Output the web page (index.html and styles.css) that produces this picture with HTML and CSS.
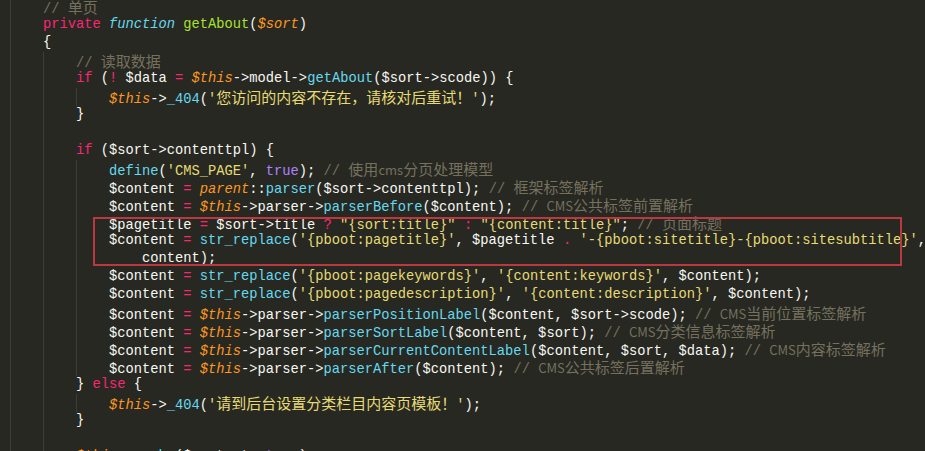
FILE: index.html
```html
<!DOCTYPE html>
<html>
<head>
<meta charset="utf-8">
<link rel="stylesheet" href="styles.css">
</head>
<body>
<div class="editor">
<div class="code">
<div class="ln"><span class="i"></span><span class="cm">// <span class="z">单页</span></span></div>
<div class="ln"><span class="i"></span><span class="k">private</span> <span class="s">function</span> <span class="f">getAbout</span>(<span class="p">$sort</span>)</div>
<div class="ln"><span class="i"></span>{</div>
<div class="ln"><span class="i"></span><span class="i"></span><span class="cm">// <span class="z">读取数据</span></span></div>
<div class="ln"><span class="i"></span><span class="i"></span><span class="k">if</span> (<span class="k">!</span> $data <span class="k">=</span> <span class="p">$this</span>-&gt;model-&gt;<span class="c">getAbout</span>($sort-&gt;scode)) {</div>
<div class="ln"><span class="i"></span><span class="i"></span><span class="i"></span><span class="p">$this</span>-&gt;<span class="c">_404</span>(<span class="str">'<span class="z">您访问的内容不存在，请核对后重试！</span>'</span>);</div>
<div class="ln"><span class="i"></span><span class="i"></span>}</div>
<div class="ln"><span class="i"></span><span class="i"></span></div>
<div class="ln"><span class="i"></span><span class="i"></span><span class="k">if</span> ($sort-&gt;contenttpl) {</div>
<div class="ln"><span class="i"></span><span class="i"></span><span class="i"></span><span class="c">define</span>(<span class="str">'CMS_PAGE'</span>, <span class="n">true</span>); <span class="cm">// <span class="z">使用<span class="za">cms</span>分页处理模型</span></span></div>
<div class="ln"><span class="i"></span><span class="i"></span><span class="i"></span>$content <span class="k">=</span> <span class="p">parent</span>::<span class="c">parser</span>($sort-&gt;contenttpl); <span class="cm">// <span class="z">框架标签解析</span></span></div>
<div class="ln"><span class="i"></span><span class="i"></span><span class="i"></span>$content <span class="k">=</span> <span class="p">$this</span>-&gt;parser-&gt;<span class="c">parserBefore</span>($content); <span class="cm">// <span class="z"><span class="za">CMS</span>公共标签前置解析</span></span></div>
<div class="ln"><span class="i"></span><span class="i"></span><span class="i"></span>$pagetitle <span class="k">=</span> $sort-&gt;title <span class="k">?</span> <span class="str">"{sort:title}"</span> <span class="k">:</span> <span class="str">"{content:title}"</span>; <span class="cm">// <span class="z">页面标题</span></span></div>
<div class="ln"><span class="i"></span><span class="i"></span><span class="i"></span>$content <span class="k">=</span> <span class="c">str_replace</span>(<span class="str">'{pboot:pagetitle}'</span>, $pagetitle <span class="k">.</span> <span class="str">'-{pboot:sitetitle}-{pboot:sitesubtitle}'</span>, $</div>
<div class="ln"><span class="i"></span><span class="i"></span><span class="i"></span><span class="w"></span>content);</div>
<div class="ln"><span class="i"></span><span class="i"></span><span class="i"></span>$content <span class="k">=</span> <span class="c">str_replace</span>(<span class="str">'{pboot:pagekeywords}'</span>, <span class="str">'{content:keywords}'</span>, $content);</div>
<div class="ln"><span class="i"></span><span class="i"></span><span class="i"></span>$content <span class="k">=</span> <span class="c">str_replace</span>(<span class="str">'{pboot:pagedescription}'</span>, <span class="str">'{content:description}'</span>, $content);</div>
<div class="ln"><span class="i"></span><span class="i"></span><span class="i"></span>$content <span class="k">=</span> <span class="p">$this</span>-&gt;parser-&gt;<span class="c">parserPositionLabel</span>($content, $sort-&gt;scode); <span class="cm">// <span class="z"><span class="za">CMS</span>当前位置标签解析</span></span></div>
<div class="ln"><span class="i"></span><span class="i"></span><span class="i"></span>$content <span class="k">=</span> <span class="p">$this</span>-&gt;parser-&gt;<span class="c">parserSortLabel</span>($content, $sort); <span class="cm">// <span class="z"><span class="za">CMS</span>分类信息标签解析</span></span></div>
<div class="ln"><span class="i"></span><span class="i"></span><span class="i"></span>$content <span class="k">=</span> <span class="p">$this</span>-&gt;parser-&gt;<span class="c">parserCurrentContentLabel</span>($content, $sort, $data); <span class="cm">// <span class="z"><span class="za">CMS</span>内容标签解析</span></span></div>
<div class="ln"><span class="i"></span><span class="i"></span><span class="i"></span>$content <span class="k">=</span> <span class="p">$this</span>-&gt;parser-&gt;<span class="c">parserAfter</span>($content); <span class="cm">// <span class="z"><span class="za">CMS</span>公共标签后置解析</span></span></div>
<div class="ln"><span class="i"></span><span class="i"></span>} <span class="k">else</span> {</div>
<div class="ln"><span class="i"></span><span class="i"></span><span class="i"></span><span class="p">$this</span>-&gt;<span class="c">_404</span>(<span class="str">'<span class="z">请到后台设置分类栏目内容页模板！</span>'</span>);</div>
<div class="ln"><span class="i"></span><span class="i"></span>}</div>
<div class="ln"><span class="i"></span><span class="i"></span></div>
<div class="ln"><span class="i"></span><span class="i"></span><span class="p">$this</span>-&gt;<span class="c">cache</span>($content, <span class="n">true</span>);</div>
</div>
<div class="mark"></div>
</div>
</body>
</html>
```
FILE: styles.css
```css
html, body {
  margin: 0;
  padding: 0;
  background: #272822;
  overflow: hidden;
  height: 451px;
}

.editor {
  position: relative;
  height: 451px;
  padding-left: 10px;
  color: #f8f8f2;
  font-family: "Liberation Mono", "DejaVu Sans Mono", monospace;
  font-size: 13.75px;
}

.code {
  margin-top: -2px;
}

.ln {
  height: 18px;
  line-height: 18px;
  white-space: pre;
  overflow: visible;
}

.i {
  display: inline-block;
  width: 33px;
  height: 18px;
  vertical-align: top;
  box-sizing: border-box;
  border-left: 1px solid #3d3e37;
}

.w {
  display: inline-block;
  width: 33px;
  height: 18px;
  vertical-align: top;
}

.k { color: #f92672; }
.s { color: #66d9ef; font-style: italic; }
.f { color: #a6e22e; }
.p { color: #fd971f; font-style: italic; }
.c { color: #66d9ef; }
.str { color: #e6db74; }
.n { color: #ae81ff; }
.cm { color: #75715e; }

.z {
  font-family: "Noto Sans CJK SC", "Noto Sans", sans-serif;
  font-size: 15px;
  line-height: 18px;
}

.za {
  font-size: 13px;
}

.mark {
  position: absolute;
  left: 93px;
  top: 219px;
  width: 809px;
  height: 49px;
  box-sizing: border-box;
  border: 2px solid #bb3840;
}
```
